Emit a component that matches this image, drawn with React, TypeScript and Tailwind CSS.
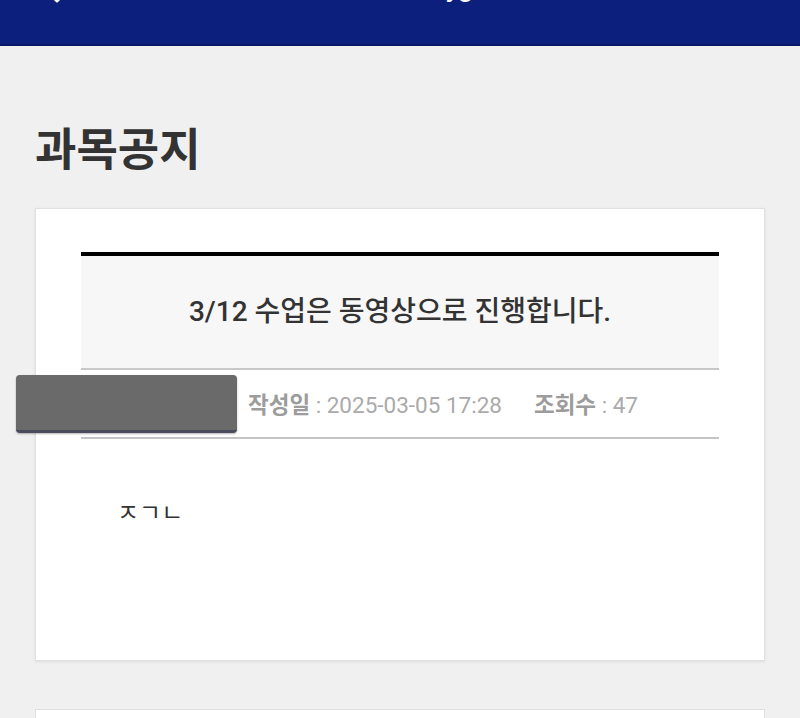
import { ChevronLeft } from 'lucide-react';

const font = { fontFamily: '"Roboto", "Noto Sans CJK KR", sans-serif' };

export default function App() {
  return (
    <div className="min-h-[718px] bg-[#f0f0f0] overflow-hidden" style={font}>
      {/* header, mostly scrolled off above the viewport */}
      <header className="h-[46px] bg-[#0c1f7d] border-b-2 border-[#0a1868] overflow-hidden">
        <div className="relative h-[40px] -mt-[32px] flex items-center justify-center">
          <ChevronLeft className="absolute left-[45px] top-[18px] w-6 h-6 text-white -rotate-90" strokeWidth={3} />
          <span className="text-white text-[26px] font-bold leading-none pl-[10px]">강의실 홈 yg</span>
        </div>
      </header>

      <main className="px-[35px] pt-[82px]">
        <h1 className="text-[45px] font-bold text-[#333] leading-none">과목공지</h1>

        <section className="relative mt-[35px] bg-white border border-[#e0e0e0] shadow-[0_1px_3px_rgba(0,0,0,0.08)] px-[45px] pt-[43px] h-[453px]">
          <div className="border-t-4 border-black bg-[#f7f7f7] border-b-2 border-b-[#c8c8c8] h-[118px] flex items-center justify-center">
            <h2 className="text-[28px] font-medium text-[#333]">3/12 수업은 동영상으로 진행합니다.</h2>
          </div>

          <div className="h-[69px] border-b-2 border-[#c4c4c4] flex items-center pt-[5px] text-[22.5px] text-[#aaa] pl-[167px] gap-[32px]">
            <span>
              <b className="font-bold text-[#9c9c9c]">작성일</b> : 2025-03-05 17:28
            </span>
            <span>
              <b className="font-bold text-[#9c9c9c]">조회수</b> : 47
            </span>
          </div>

          <div className="pt-[56px] pl-[36px] text-[24px] text-[#333]">ㅈㄱㄴ</div>

          {/* redaction box over the writer name */}
          <div className="absolute left-[-20px] top-[166px] w-[221px] h-[58px] rounded-[4px] bg-[#6a6a6a] border-b-[3px] border-[#4a4c5e] shadow-[0_1px_2px_rgba(0,0,0,0.3)]" />
        </section>

        <section className="mt-[48px] bg-white border border-[#e0e0e0] h-[40px]" />
      </main>
    </div>
  );
}
